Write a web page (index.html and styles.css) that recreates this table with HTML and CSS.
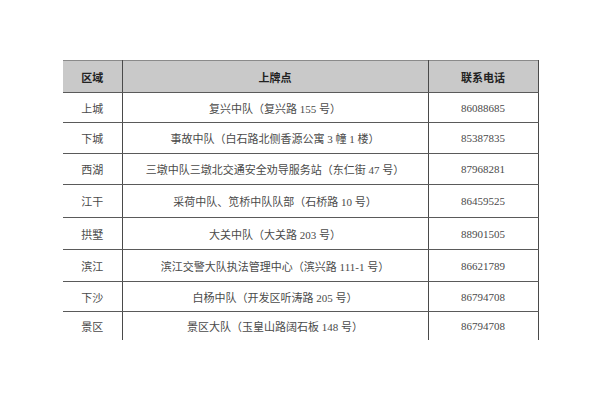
FILE: index.html
```html
<!DOCTYPE html>
<html lang="zh-CN">
<head>
<meta charset="utf-8">
<link rel="stylesheet" href="styles.css">
</head>
<body>
<table class="grid">
  <colgroup>
    <col class="c-area"><col class="c-place"><col class="c-tel">
  </colgroup>
  <thead>
    <tr><th>区域</th><th>上牌点</th><th>联系电话</th></tr>
  </thead>
  <tbody>
    <tr class="short"><td>上城</td><td>复兴中队（复兴路 155 号）</td><td>86088685</td></tr>
    <tr><td>下城</td><td>事故中队（白石路北侧香源公寓 3 幢 1 楼）</td><td>85387835</td></tr>
    <tr><td>西湖</td><td>三墩中队三墩北交通安全劝导服务站（东仁街 47 号）</td><td>87968281</td></tr>
    <tr class="tall"><td>江干</td><td>采荷中队、笕桥中队队部（石桥路 10 号）</td><td>86459525</td></tr>
    <tr class="mid"><td>拱墅</td><td>大关中队（大关路 203 号）</td><td>88901505</td></tr>
    <tr class="mid"><td>滨江</td><td>滨江交警大队执法管理中心（滨兴路 111-1 号）</td><td>86621789</td></tr>
    <tr class="short"><td>下沙</td><td>白杨中队（开发区听涛路 205 号）</td><td>86794708</td></tr>
    <tr class="last"><td>景区</td><td>景区大队（玉皇山路阔石板 148 号）</td><td>86794708</td></tr>
  </tbody>
</table>
</body>
</html>
```
FILE: styles.css
```css
html, body {
  margin: 0;
  padding: 0;
  background: #ffffff;
}
body {
  padding: 60px 0 0 63px;
  font-family: "Liberation Serif", "Noto Sans CJK SC", serif;
  font-size: 11px;
  color: #4a4a4a;
}
.grid {
  border-collapse: collapse;
  table-layout: fixed;
  width: 475px;
}
.c-area { width: 59px; }
.c-place { width: 306px; }
.c-tel { width: 110px; }
.grid th, .grid td {
  padding: 0;
  text-align: center;
  vertical-align: middle;
  border-top: 1px solid #5a5a5a;
  border-bottom: 1px solid #5a5a5a;
  border-left: 1px solid #4a4a4a;
  border-right: 1px solid #4a4a4a;
}
.grid th:first-child, .grid td:first-child {
  border-left: none;
}
.grid th {
  height: 31px;
  background: #c9c9c9;
  color: #222;
  font-weight: bold;
  border-top-color: #8a8a8a;
}
.grid td {
  height: 30px;
}
.grid tr.short td { height: 29px; }
.grid tr.mid td { height: 31px; }
.grid tr.tall td { height: 32px; }
.grid tr.last td {
  height: 28px;
  border-bottom: none;
}
```
